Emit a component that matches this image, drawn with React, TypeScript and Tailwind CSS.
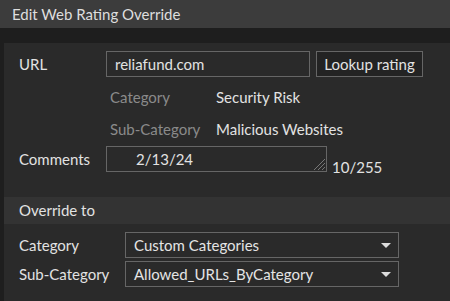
import React from 'react'

const font = { fontFamily: 'Lato, "Open Sans", sans-serif' }

const Select: React.FC<{ value: string }> = ({ value }) => (
  <div className="flex items-center justify-between w-[274px] h-[26px] border border-[#666] pl-[8px] pr-[6px] text-[#e4e4e4]">
    <span>{value}</span>
    <svg width="12" height="7" viewBox="0 0 12 7">
      <path d="M1 1h10L6 6z" fill="#dcdcdc" />
    </svg>
  </div>
)

export default function App() {
  return (
    <div className="w-[450px] h-[301px] bg-[#2a2a2a] text-[15px] text-[#e2e2e2] overflow-hidden flex flex-col" style={font}>
      {/* title */}
      <div className="h-[28px] bg-[#3c3c3c] pl-[12px] flex items-center text-[#dedede]">
        Edit Web Rating Override
      </div>
      <div className="h-[15px] bg-[#1e1e1e]" />

      <div className="flex flex-1">
        <div className="w-[4px] bg-[#1e1e1e]" />
        <div className="flex-1 bg-[#2a2a2a]">
          {/* URL */}
          <div className="flex items-center mt-[8px] pl-[15px]">
            <span className="w-[87px]">URL</span>
            <div className="w-[204px] h-[26px] border border-[#666] pl-[8px] flex items-center">reliafund.com</div>
            <button className="ml-[6px] w-[107px] h-[26px] border border-[#666] bg-[#232323] flex items-center justify-center text-[#e2e2e2]">
              Lookup rating
            </button>
          </div>

          {/* current rating */}
          <div className="mt-[4px] pl-[106px]">
            <div className="flex items-center h-[32px]">
              <span className="w-[106px] text-[#8a8a8a]">Category</span>
              <span>Security Risk</span>
            </div>
            <div className="flex items-center h-[32px]">
              <span className="w-[106px] text-[#8a8a8a]">Sub-Category</span>
              <span>Malicious Websites</span>
            </div>
          </div>

          {/* comments */}
          <div className="flex items-center mt-[1px] pl-[15px]">
            <span className="w-[87px]">Comments</span>
            <div className="relative w-[221px] h-[26px] border border-[#666] pl-[29px] flex items-center">
              2/13/24
              <svg className="absolute right-0 bottom-0" width="14" height="14" viewBox="0 0 14 14">
                <path d="M13 2L2 13M13 6L6 13M13 10L10 13" stroke="#777" strokeWidth="1" />
              </svg>
            </div>
            <span className="ml-[5px] self-end -mb-[6px]">10/255</span>
          </div>

          {/* override section */}
          <div className="mt-[25px] h-[27px] bg-[#333] pl-[15px] flex items-center">Override to</div>

          <div className="mt-[8px] pl-[15px] flex flex-col gap-[3px]">
            <div className="flex items-center">
              <span className="w-[106px]">Category</span>
              <Select value="Custom Categories" />
            </div>
            <div className="flex items-center">
              <span className="w-[106px]">Sub-Category</span>
              <Select value="Allowed_URLs_ByCategory" />
            </div>
          </div>
        </div>
      </div>
    </div>
  )
}
